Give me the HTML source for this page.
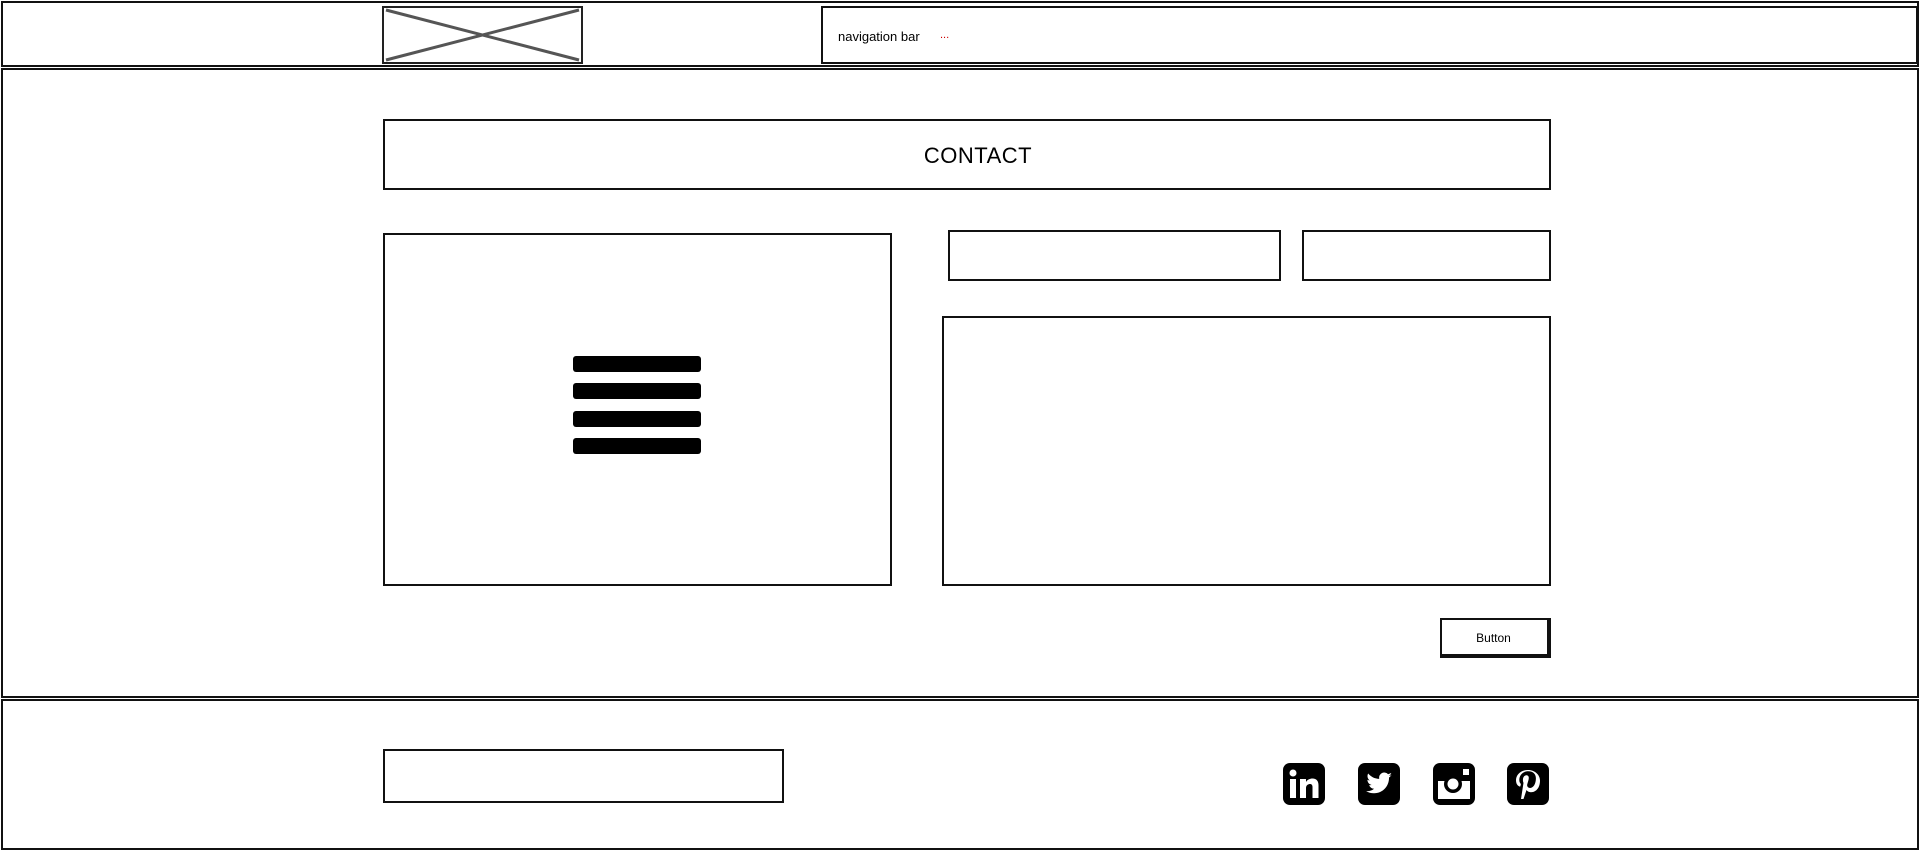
<!DOCTYPE html>
<html><head><meta charset="utf-8"><style>
*{margin:0;padding:0;box-sizing:border-box}
body{width:1920px;height:851px;background:#fff;position:relative;overflow:hidden;font-family:"Liberation Sans",sans-serif;color:#000}
.b{position:absolute;border:2px solid #111}
.t{position:absolute}
.bar{position:absolute;left:573px;width:128px;height:16px;background:#000;border-radius:3px}
</style></head><body>
<div class="b" style="left:1px;top:1px;width:1918px;height:66px"></div>
<div class="b" style="left:382px;top:6px;width:201px;height:58px;border-color:#222"></div>
<svg class="t" style="left:384px;top:8px" width="197" height="54"><line x1="2" y1="2" x2="195" y2="52" stroke="#555" stroke-width="3"/><line x1="2" y1="52" x2="195" y2="2" stroke="#555" stroke-width="3"/></svg>
<div class="b" style="left:821px;top:6px;width:1097px;height:58px"></div>
<div class="t" style="left:838px;top:29px;font-size:13px">navigation bar</div>
<div class="t" style="left:940px;top:29px;font-size:11px;color:#c00">...</div>
<div class="b" style="left:1px;top:68px;width:1918px;height:630px"></div>
<div class="b" style="left:383px;top:119px;width:1168px;height:71px"></div>
<div class="t" style="left:394px;top:143px;width:1168px;text-align:center;font-size:22px;letter-spacing:0.5px">CONTACT</div>
<div class="b" style="left:383px;top:233px;width:509px;height:353px"></div>
<div class="bar" style="top:356px"></div><div class="bar" style="top:383px"></div><div class="bar" style="top:411px"></div><div class="bar" style="top:438px"></div>
<div class="b" style="left:948px;top:230px;width:333px;height:51px"></div>
<div class="b" style="left:1302px;top:230px;width:249px;height:51px"></div>
<div class="b" style="left:942px;top:316px;width:609px;height:270px"></div>
<div class="b" style="left:1440px;top:618px;width:111px;height:40px;border-right-width:4px;border-bottom-width:4px"></div>
<div class="t" style="left:1440px;top:631px;width:107px;text-align:center;font-size:12px">Button</div>
<div class="b" style="left:1px;top:699px;width:1918px;height:151px"></div>
<div class="b" style="left:383px;top:749px;width:401px;height:54px"></div>
<svg class="t" style="left:1283px;top:763px" width="42" height="42" viewBox="0 0 42 42"><rect width="42" height="42" rx="7"/><rect x="7" y="16" width="6" height="19" fill="#fff"/><circle cx="10" cy="10" r="3.5" fill="#fff"/><path d="M17 16h6v3c1.5-2.5 4-3.5 6.5-3.5 4 0 6 2.5 6 7V35h-6V24c0-2-1-3-2.5-3s-4 1-4 4V35h-6z" fill="#fff"/></svg>
<svg class="t" style="left:1358px;top:763px" width="42" height="42" viewBox="0 0 42 42"><rect width="42" height="42" rx="7"/><path d="M34 12c-1 .5-2 .8-3 .9 1-.7 2-1.700 2.300-3-1 .600-2 1-3.200 1.300a5.200 5.200 0 0 0-8.900 4.700C16.600 15.700 12.800 13.700 10.200 10.500c-1.400 2.400-.600 5.500 1.600 7-.900 0-1.700-.300-2.400-.700 0 2.500 1.800 4.700 4.200 5.200-.800.200-1.600.200-2.400.100.700 2.100 2.600 3.600 4.900 3.600A10.500 10.500 0 0 1 8 28c2.300 1.500 5 2.300 8 2.300 9.600 0 15-8 15-15v-.700c1.100-.800 2-1.700 2.700-2.700z" fill="#fff"/></svg>
<svg class="t" style="left:1433px;top:763px" width="42" height="42" viewBox="0 0 42 42"><rect width="42" height="42" rx="7"/><rect x="5" y="18" width="32" height="18" fill="#fff"/><circle cx="20" cy="21" r="9" fill="#000"/><circle cx="20" cy="21" r="5.5" fill="#fff"/><rect x="30" y="6" width="6" height="6" fill="#fff"/></svg>
<svg class="t" style="left:1507px;top:763px" width="42" height="42" viewBox="0 0 42 42"><rect width="42" height="42" rx="7"/><path d="M21 7c-8 0-12 5.500-12 10 0 3 1 5.500 3.500 6.500.5.200.8 0 .9-.400l.4-1.500c.1-.500 0-.700-.3-1.100-.8-.900-1.200-2-1.200-3.600 0-4.600 3.400-8.600 9-8.600 4.900 0 7.600 3 7.600 7 0 5.300-2.300 9.700-5.800 9.700-1.900 0-3.300-1.600-2.900-3.500.6-2.300 1.600-4.800 1.600-6.500 0-1.500-.8-2.700-2.400-2.700-2 0-3.500 2-3.500 4.700 0 1.700.6 2.900.6 2.900L14 36h2.500l3-9c.8 1.300 2.600 2.200 4.400 2.200 5.800 0 9.100-5.300 9.100-11.600C33 12 28 7 21 7z" fill="#fff"/></svg>
</body></html>
